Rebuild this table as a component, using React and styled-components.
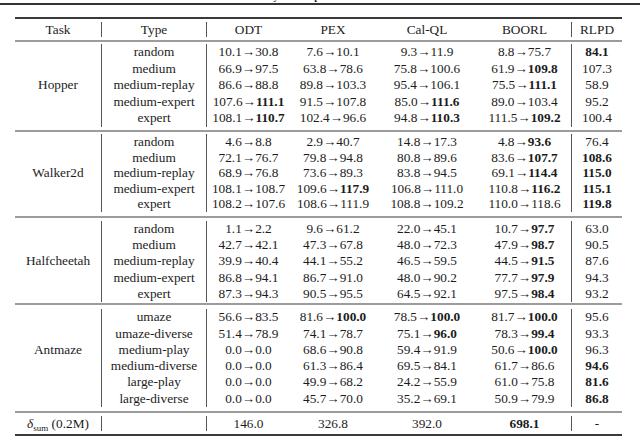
import React from "react";
import styled, { createGlobalStyle } from "styled-components";

const GlobalStyle = createGlobalStyle`
  html, body {
    margin: 0;
    padding: 0;
    background: #fff;
  }
  body {
    width: 640px;
    height: 436px;
    overflow: hidden;
    font-family: "Liberation Serif", "DejaVu Serif", serif;
    color: #1c1c1c;
  }
`;

const SERIF = `"Liberation Serif", "DejaVu Serif", serif`;
const COLS = "86px 105px 84px 86px 102px 93px 51px";

const PageHead = styled.div`
  height: 3px;
  overflow: hidden;
  display: flex;
  align-items: flex-end;
  padding-left: 240px;
  font-family: ${SERIF};
  font-size: 10px;
  line-height: 13px;
  font-weight: bold;
  white-space: nowrap;
`;

const PageRule = styled.div`
  border-bottom: 2px solid #333;
`;

const Table = styled.div`
  margin: 12px 0 0 15px;
  width: 607px;
  border-top: 2px solid #3a3a3a;
  font-family: ${SERIF};
  font-size: 13.3px;
`;

const Section = styled.div`
  padding: ${(p) => p.$pt}px 0 ${(p) => p.$pb}px;
  border-bottom: ${(p) => (p.$last ? "2px solid #3a3a3a" : "2px solid #9c9c9c")};
`;

const Row = styled.div`
  display: grid;
  grid-template-columns: ${COLS};
  height: ${(p) => p.$h}px;
  line-height: ${(p) => p.$h}px;
`;

const Cell = styled.div`
  text-align: center;
  white-space: nowrap;
  box-sizing: border-box;
  border-left: ${(p) => (p.$line ? "1px solid #555" : "none")};
`;

const Sub = styled.sub`
  font-size: 9px;
  line-height: 0;
  vertical-align: -3px;
`;

const headers = ["Task", "Type", "ODT", "PEX", "Cal-QL", "BOORL", "RLPD"];

const groups = [
  {
    task: "Hopper",
    h: 16.5,
    pt: 2,
    pb: 3.5,
    rows: [
      ["random", "10.1 30.8", "7.6 10.1", "9.3 11.9", "8.8 75.7", "!84.1"],
      ["medium", "66.9 97.5", "63.8 78.6", "75.8 100.6", "61.9 !109.8", "107.3"],
      ["medium-replay", "86.6 88.8", "89.8 103.3", "95.4 106.1", "75.5 !111.1", "58.9"],
      ["medium-expert", "107.6 !111.1", "91.5 107.8", "85.0 !111.6", "89.0 103.4", "95.2"],
      ["expert", "108.1 !110.7", "102.4 96.6", "94.8 !110.3", "111.5 !109.2", "100.4"],
    ],
  },
  {
    task: "Walker2d",
    h: 15.5,
    pt: 2,
    pb: 4.5,
    rows: [
      ["random", "4.6 8.8", "2.9 40.7", "14.8 17.3", "4.8 !93.6", "76.4"],
      ["medium", "72.1 76.7", "79.8 94.8", "80.8 89.6", "83.6 !107.7", "!108.6"],
      ["medium-replay", "68.9 76.8", "73.6 89.3", "83.8 94.5", "69.1 !114.4", "!115.0"],
      ["medium-expert", "108.1 108.7", "109.6 !117.9", "106.8 111.0", "110.8 !116.2", "!115.1"],
      ["expert", "108.2 107.6", "108.6 111.9", "108.8 109.2", "110.0 118.6", "!119.8"],
    ],
  },
  {
    task: "Halfcheetah",
    h: 16.2,
    pt: 3,
    pb: 1.3,
    rows: [
      ["random", "1.1 2.2", "9.6 61.2", "22.0 45.1", "10.7 !97.7", "63.0"],
      ["medium", "42.7 42.1", "47.3 67.8", "48.0 72.3", "47.9 !98.7", "90.5"],
      ["medium-replay", "39.9 40.4", "44.1 55.2", "46.5 59.5", "44.5 !91.5", "87.6"],
      ["medium-expert", "86.8 94.1", "86.7 91.0", "48.0 90.2", "77.7 !97.9", "94.3"],
      ["expert", "87.3 94.3", "90.5 95.5", "64.5 92.1", "97.5 !98.4", "93.2"],
    ],
  },
  {
    task: "Antmaze",
    h: 16.3,
    pt: 4,
    pb: 3.5,
    rows: [
      ["umaze", "56.6 83.5", "81.6 !100.0", "78.5 !100.0", "81.7 !100.0", "95.6"],
      ["umaze-diverse", "51.4 78.9", "74.1 78.7", "75.1 !96.0", "78.3 !99.4", "93.3"],
      ["medium-play", "0.0 0.0", "68.6 90.8", "59.4 91.9", "50.6 !100.0", "96.3"],
      ["medium-diverse", "0.0 0.0", "61.3 86.4", "69.5 84.1", "61.7 86.6", "!94.6"],
      ["large-play", "0.0 0.0", "49.9 68.2", "24.2 55.9", "61.0 75.8", "!81.6"],
      ["large-diverse", "0.0 0.0", "45.7 70.0", "35.2 69.1", "50.9 79.9", "!86.8"],
    ],
  },
];

function Value({ text }) {
  const parts = text.split(" ").map((s, i) =>
    s.startsWith("!") ? <b key={i}>{s.slice(1)}</b> : <span key={i}>{s}</span>
  );
  if (parts.length === 1) return parts[0];
  return (
    <>
      {parts[0]}→{parts[1]}
    </>
  );
}

function DataRow({ h, task, row }) {
  const [type, ...vals] = row;
  return (
    <Row $h={h}>
      <Cell>{task}</Cell>
      <Cell $line>{type}</Cell>
      {vals.map((v, i) => (
        <Cell key={i} $line={i === 0 || i === 4}>
          <Value text={v} />
        </Cell>
      ))}
    </Row>
  );
}

export default function App() {
  return (
    <>
      <GlobalStyle />
      <PageHead>The Way to Go Up</PageHead>
      <PageRule />
      <Table>
        <Section $pt={3} $pb={3}>
          <Row $h={15}>
            {headers.map((t, i) => (
              <Cell key={t} $line={i === 1 || i === 2 || i === 6}>
                {t}
              </Cell>
            ))}
          </Row>
        </Section>
        {groups.map((g) => {
          const mid = Math.floor((g.rows.length - 1) / 2);
          return (
            <Section key={g.task} $pt={g.pt} $pb={g.pb}>
              {g.rows.map((r, i) => (
                <DataRow key={r[0]} h={g.h} task={i === mid ? g.task : ""} row={r} />
              ))}
            </Section>
          );
        })}
        <Section $pt={3} $pb={3} $last>
          <Row $h={15.6}>
            <Cell>
              <i>δ</i>
              <Sub>sum</Sub> (0.2M)
            </Cell>
            <Cell $line />
            <Cell $line>146.0</Cell>
            <Cell>326.8</Cell>
            <Cell>392.0</Cell>
            <Cell>
              <b>698.1</b>
            </Cell>
            <Cell $line>-</Cell>
          </Row>
        </Section>
      </Table>
    </>
  );
}
